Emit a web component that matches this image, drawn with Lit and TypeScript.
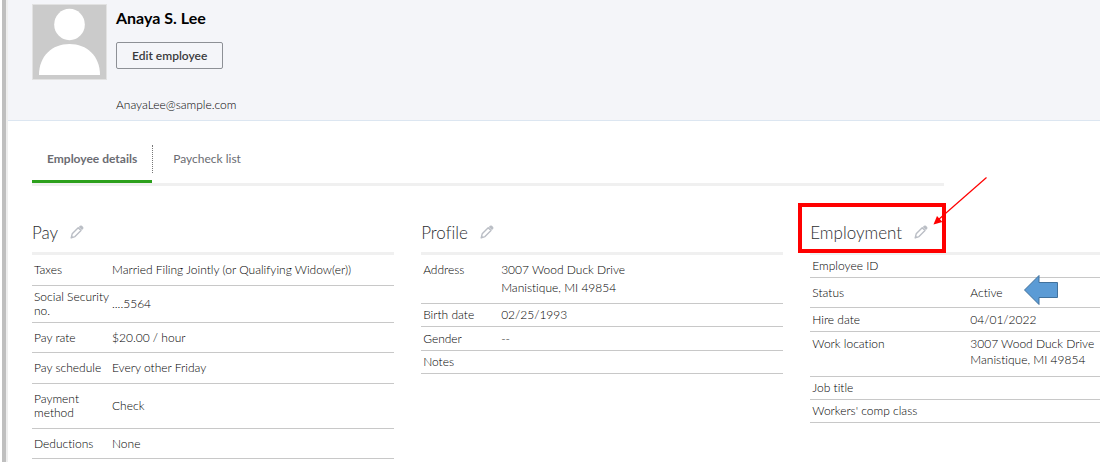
import { LitElement, html, svg, css, nothing } from "lit";
import { customElement, property } from "lit/decorators.js";

interface Row {
  label: string;
  lines: string[];
  size: string;
}

const PAY: Row[] = [
  { label: "Taxes", lines: ["Married Filing Jointly (or Qualifying Widow(er))"], size: "roomy" },
  { label: "Social Security no.", lines: ["....5564"], size: "double" },
  { label: "Pay rate", lines: ["$20.00 / hour"], size: "regular" },
  { label: "Pay schedule", lines: ["Every other Friday"], size: "roomy" },
  { label: "Payment method", lines: ["Check"], size: "tall" },
  { label: "Deductions", lines: ["None"], size: "regular" },
];

const PROFILE: Row[] = [
  { label: "Address", lines: ["3007 Wood Duck Drive", "Manistique, MI 49854"], size: "address" },
  { label: "Birth date", lines: ["02/25/1993"], size: "compact" },
  { label: "Gender", lines: ["--"], size: "snug" },
  { label: "Notes", lines: [], size: "compact" },
];

const EMPLOYMENT: Row[] = [
  { label: "Employee ID", lines: [], size: "compact" },
  { label: "Status", lines: ["Active"], size: "regular" },
  { label: "Hire date", lines: ["04/01/2022"], size: "snug" },
  { label: "Work location", lines: ["3007 Wood Duck Drive", "Manistique, MI 49854"], size: "location" },
  { label: "Job title", lines: [], size: "compact" },
  { label: "Workers' comp class", lines: [], size: "compact" },
];

const pencil = svg`
  <path d="M1.200 12.800 L2.200 8.800 L8.200 2.800 L11 5.600 L5 11.600 Z" fill="none" stroke="#babec5" stroke-width="1.400" stroke-linejoin="round"/>
  <path d="M.8 13.200 L1.600 10.400 L3.600 12.400 Z" fill="#babec5"/>
  <path d="M8.800 2 L10 .8 Q11 0 12 .8 L13.100 1.900 Q13.900 2.900 13.100 3.900 L11.900 5.100 Z" fill="#babec5"/>`;

@customElement("detail-section")
export class DetailSection extends LitElement {
  @property() heading = "";
  @property({ attribute: false }) rows: Row[] = [];
  @property({ type: Boolean, reflect: true }) wide = false;

  static styles = css`
    :host { display: block; min-width: 0; }
    .head {
      display: flex;
      align-items: center;
      gap: 12px;
      height: 38px;
      border-bottom: 3px solid #f0f0f0;
    }
    h2 { margin: 0; font-size: 17px; line-height: 20px; font-weight: 300; color: #2c2e31; }
    .edit { display: flex; padding: 0 0 2px; border: 0; background: none; cursor: pointer; }
    table { width: 100%; border-collapse: separate; border-spacing: 0; table-layout: fixed; }
    .label-col { width: 80px; }
    :host([wide]) .label-col { width: 160px; }
    th, td {
      padding: 0;
      border-bottom: 1px solid #c8c8c8;
      line-height: 14px;
      font-weight: 300;
      text-align: left;
      vertical-align: middle;
      box-sizing: border-box;
      color: #000;
    }
    th { padding-left: 2px; }
    .compact > * { height: 23px; }
    .snug > * { height: 24px; }
    .regular > * { height: 30px; }
    .roomy > * { height: 31px; }
    .double > * { height: 37px; }
    .tall > * { height: 45px; }
    .address > * { height: 49px; padding-top: 6px; vertical-align: top; line-height: 18px; }
    .location > * { height: 45px; padding-top: 4px; vertical-align: top; line-height: 16px; }
    .line { display: block; }
  `;

  render() {
    return html`
      <div class="head">
        <h2>${this.heading}</h2>
        <button class="edit" aria-label="Edit ${this.heading}">
          <svg width="14" height="14" viewBox="0 0 14 14">${pencil}</svg>
        </button>
      </div>
      <table>
        <colgroup><col class="label-col" /><col /></colgroup>
        <tbody>
          ${this.rows.map(
            (r) => html`<tr class=${r.size}>
              <th scope="row">${r.label}</th>
              <td>${r.lines.length ? r.lines.map((l) => html`<span class="line">${l}</span>`) : nothing}</td>
            </tr>`
          )}
        </tbody>
      </table>
    `;
  }
}

@customElement("app-root")
export class AppRoot extends LitElement {
  static styles = css`
    :host {
      display: block;
      box-sizing: border-box;
      min-height: 100vh;
      padding-left: 2px;
      overflow: hidden;
      background: #fff;
      font-family: Lato, "Liberation Sans", sans-serif;
      font-size: 12px;
      font-variant-ligatures: none;
      color: #222;
    }
    .page {
      box-sizing: border-box;
      min-height: 100vh;
      border-left: 4px solid #bfbfbf;
      box-shadow: inset 2px 0 #eeeeee;
      padding-left: 2px;
    }
    header {
      display: flex;
      gap: 9px;
      padding: 4px 24px 7px;
      background: #f4f5f9;
      border-bottom: 1px solid #dce6f1;
    }
    .avatar { display: block; flex: none; }
    .who { display: flex; flex-direction: column; align-items: flex-start; }
    h1 { margin: 4px 0 0; font-size: 16px; line-height: 20px; font-weight: 700; color: #000; }
    .edit-employee {
      margin-top: 14px;
      height: 27px;
      padding: 0 15px;
      border: 1px solid #8d9096;
      border-radius: 2px;
      background: transparent;
      font: 600 12px/16px Lato, "Liberation Sans", sans-serif;
      color: #393a3d;
    }
    .email { margin-top: 28px; line-height: 16px; font-weight: 300; color: #000; text-decoration: none; }
    main { padding: 24px 0 0 24px; }
    nav { display: flex; margin-right: 156px; border-bottom: 3px solid #f0f0f0; }
    .tab {
      display: flex;
      align-items: flex-start;
      height: 35px;
      border-bottom: 3px solid transparent;
      color: #6b6c72;
      text-decoration: none;
    }
    .tab span { line-height: 28px; padding: 0 20px; border-left: 1px dotted #777; }
    .tab.active { border-bottom-color: #2ca01c; font-weight: 700; }
    .tab.active span { padding: 0 15px; border-left: 0; }
    .columns {
      display: grid;
      grid-template-columns: 5fr 5fr 4fr;
      gap: 27px;
      align-items: start;
      padding-top: 28px;
    }
    .marked { position: relative; }
    .marks { position: absolute; left: -12px; top: -37px; pointer-events: none; }
  `;

  render() {
    return html`
      <div class="page">
        <header>
          <svg class="avatar" width="75" height="76" viewBox="0 0 75 76" role="img" aria-label="Employee photo">
            <rect x=".5" y=".5" width="74" height="75" fill="#cbcbcb" stroke="#e2e2e2" />
            <ellipse cx="37.5" cy="20.5" rx="15.3" ry="15.7" fill="#fff" />
            <path d="M7 71 C7 52 20 40 37.500 40 C55 40 68 52 68 71 Z" fill="#fff" />
          </svg>
          <div class="who">
            <h1>Anaya S. Lee</h1>
            <button class="edit-employee">Edit employee</button>
            <a class="email" href="mailto:AnayaLee@sample.com">AnayaLee@sample.com</a>
          </div>
        </header>
        <main>
          <nav>
            <a class="tab active" href="#details"><span>Employee details</span></a>
            <a class="tab" href="#paychecks"><span>Paycheck list</span></a>
          </nav>
          <div class="columns">
            <detail-section heading="Pay" .rows=${PAY}></detail-section>
            <detail-section heading="Profile" .rows=${PROFILE}></detail-section>
            <div class="marked">
              <detail-section wide heading="Employment" .rows=${EMPLOYMENT}></detail-section>
              <svg class="marks" width="264" height="132" viewBox="798 177 264 132">
                <rect x="800" y="205" width="144" height="46" fill="none" stroke="#f00" stroke-width="4" />
                <path d="M986.500 177.500 L938 220" stroke="#f00" stroke-width="1.200" />
                <path d="M933.500 224.500 L937 216 L942.500 222 Z" fill="#f00" />
                <path d="M1024.500 290 L1039 275.500 V282.500 H1057.500 V297.500 H1039 V304.500 Z" fill="#5b9bd5" stroke="#41719c" />
              </svg>
            </div>
          </div>
        </main>
      </div>
    `;
  }
}
